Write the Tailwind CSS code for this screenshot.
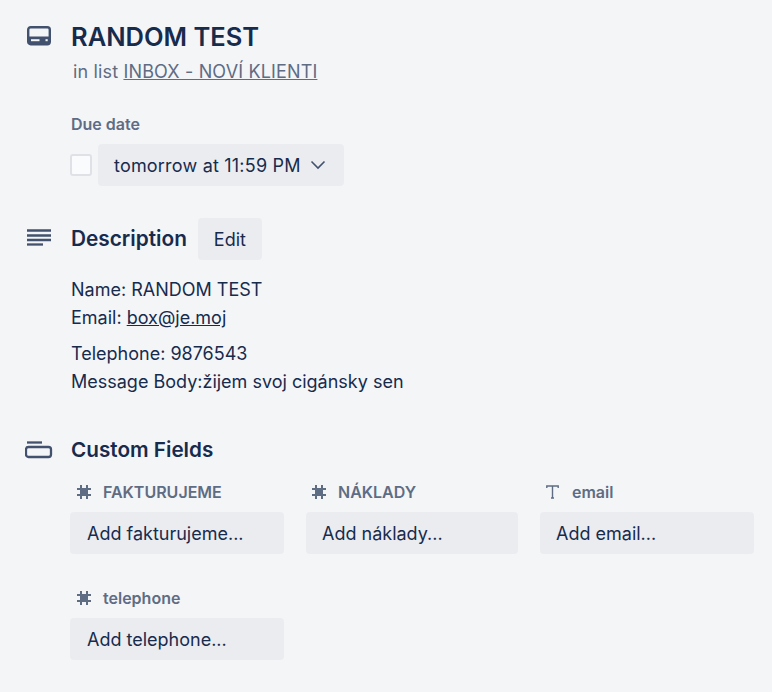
<!DOCTYPE html>
<html lang="en">
<head>
    <meta charset="UTF-8">
    <title>RANDOM TEST</title>
    <script src="https://cdn.jsdelivr.net/npm/@tailwindcss/browser@4"></script>
</head>
<body class="bg-[#f4f5f7] text-[#172b4d] font-['Inter',sans-serif] h-[692px] overflow-hidden">
    <div class="pr-[18px] pt-[21px]">

        <!-- Title -->
        <div class="flex">
            <div class="w-[70px] shrink-0 pl-[26px] pt-[4px]">
                <svg width="26" height="22" viewBox="0 0 26 22">
                    <rect x="2.200" y="2.200" width="21.600" height="17" rx="2.500" fill="#f4f5f7" stroke="#42526e" stroke-width="2.400"/>
                    <path d="M2.200 11.500h21.600v5.200a2.500 2.500 0 0 1-2.500 2.500H4.700a2.500 2.500 0 0 1-2.500-2.500z" fill="#42526e"/>
                    <rect x="5" y="14.200" width="8.500" height="2" fill="#f4f5f7"/>
                    <rect x="19.500" y="14.200" width="2.200" height="2" fill="#f4f5f7"/>
                </svg>
            </div>
            <div>
                <h1 class="text-[25.500px] leading-[32px] font-semibold pl-px">RANDOM TEST</h1>
                <p class="text-[18px] leading-[24px] text-[#5e6c84] pl-[3px] mt-[7px] tracking-[0.15px]">in list <a href="#" class="underline">INBOX - NOVÍ KLIENTI</a></p>
            </div>
        </div>

        <!-- Due date -->
        <div class="pl-[70px] mt-[30px]">
            <h3 class="text-[16px] leading-[20px] font-semibold text-[#5e6c84] pl-px">Due date</h3>
            <div class="flex items-center gap-[6px] mt-[10px]">
                <span class="w-[22px] h-[22px] rounded-[3px] bg-[#fafbfc] border-2 border-[#dfe1e6]"></span>
                <button class="h-[42px] w-[246px] flex items-center pl-[16px] rounded-[4px] bg-[#ebecf0] text-[18px] tracking-[0.2px]">
                    tomorrow at 11:59 PM
                    <svg class="ml-[9px]" width="16" height="10" viewBox="0 0 16 10"><path d="M1.5 1.5 8 8l6.500-6.500" fill="none" stroke="#42526e" stroke-width="1.600"/></svg>
                </button>
            </div>
        </div>

        <!-- Description -->
        <div class="flex items-center mt-[32px]">
            <div class="w-[70px] shrink-0 pl-[27px]">
                <svg width="24" height="20" viewBox="0 0 24 20">
                    <path d="M0 1.500h24M0 6.500h24M0 11h24" stroke="#42526e" stroke-width="2.300"/>
                    <path d="M0 15.500h16" stroke="#42526e" stroke-width="2.300"/>
                </svg>
            </div>
            <h3 class="text-[20.800px] leading-[28px] font-semibold pl-px">Description</h3>
            <button class="ml-[11px] h-[42px] w-[64px] rounded-[4px] bg-[#ebecf0] text-[18px]">Edit</button>
        </div>
        <div class="pl-[71px] mt-[16px] text-[18px] leading-[28px]">
            <p>Name: RANDOM TEST<br>Email: <a href="#" class="underline">box@je.moj</a></p>
            <p class="mt-[8px]">Telephone: 9876543<br>Message Body:žijem svoj cigánsky sen</p>
        </div>

        <!-- Custom fields -->
        <div class="flex items-center mt-[40px]">
            <div class="w-[70px] shrink-0 pl-[25px]">
                <svg width="28" height="18" viewBox="0 0 28 18">
                    <path d="M2 1.500h15" stroke="#42526e" stroke-width="2.300"/>
                    <rect x="1" y="6" width="25" height="10" rx="2.500" fill="none" stroke="#42526e" stroke-width="2.300"/>
                </svg>
            </div>
            <h3 class="text-[20.700px] leading-[28px] font-semibold pl-px">Custom Fields</h3>
        </div>
        <div class="pl-[70px] mt-[18px] grid grid-cols-[214px_212px_214px] gap-x-[22px] gap-y-[34px]">
            <div>
                <div class="flex items-center h-[20px] text-[16px] font-semibold text-[#5e6c84]">
                    <svg class="ml-[7px] mr-[12px]" width="14" height="14" viewBox="0 0 14 14"><path d="M4 0v14M10 0v14M0 4h14M0 10h14" stroke="#5e6c84" stroke-width="2"/><rect x="4" y="4" width="6" height="6" fill="#5e6c84"/></svg>
                    FAKTURUJEME
                </div>
                <button class="mt-[10px] w-full h-[42px] rounded-[4px] bg-[#ebecf0] text-[18px] text-left pl-[17px]">Add fakturujeme...</button>
            </div>
            <div>
                <div class="flex items-center h-[20px] text-[16px] font-semibold text-[#5e6c84]">
                    <svg class="ml-[6px] mr-[12px]" width="14" height="14" viewBox="0 0 14 14"><path d="M4 0v14M10 0v14M0 4h14M0 10h14" stroke="#5e6c84" stroke-width="2"/><rect x="4" y="4" width="6" height="6" fill="#5e6c84"/></svg>
                    NÁKLADY
                </div>
                <button class="mt-[10px] w-full h-[42px] rounded-[4px] bg-[#ebecf0] text-[18px] text-left pl-[16px]">Add náklady...</button>
            </div>
            <div>
                <div class="flex items-center h-[20px] text-[16px] font-semibold text-[#5e6c84]">
                    <svg class="ml-[6px] mr-[13px]" width="13" height="14" viewBox="0 0 13 14"><path d="M.8 3V1h11.400v2M6.500 1v12M5 13h3" fill="none" stroke="#5e6c84" stroke-width="1.400"/></svg>
                    email
                </div>
                <button class="mt-[10px] w-full h-[42px] rounded-[4px] bg-[#ebecf0] text-[18px] text-left pl-[16px]">Add email...</button>
            </div>
            <div>
                <div class="flex items-center h-[20px] text-[16px] font-semibold text-[#5e6c84]">
                    <svg class="ml-[7px] mr-[12px]" width="14" height="14" viewBox="0 0 14 14"><path d="M4 0v14M10 0v14M0 4h14M0 10h14" stroke="#5e6c84" stroke-width="2"/><rect x="4" y="4" width="6" height="6" fill="#5e6c84"/></svg>
                    telephone
                </div>
                <button class="mt-[10px] w-full h-[42px] rounded-[4px] bg-[#ebecf0] text-[18px] text-left pl-[17px]">Add telephone...</button>
            </div>
        </div>
    </div>
</body>
</html>
